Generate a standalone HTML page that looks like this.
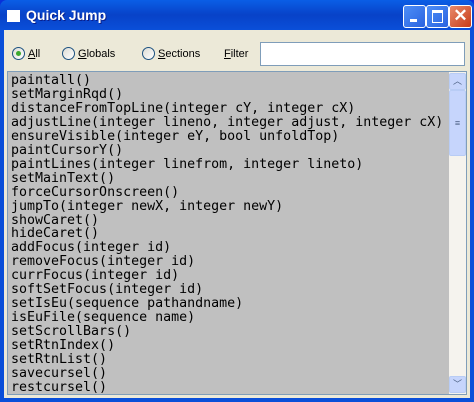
<!DOCTYPE html><html><head><style>
body{margin:0;width:474px;height:402px;overflow:hidden;background:#0831d9;font-family:"Liberation Sans",sans-serif}
.win{position:absolute;left:0;top:0;width:474px;height:402px;background:linear-gradient(#0a5ee6,#0842c8 15px,#0a4fd9 30px);border-radius:7px 7px 0 0}
.title{position:absolute;left:26px;top:7px;color:#fff;font-weight:bold;font-size:14px;text-shadow:1px 1px #0a1e8a}
.ico{position:absolute;left:7px;top:10px;width:13px;height:10px;background:#fff;border-top:2px solid #fff}
.btn{position:absolute;top:5px;width:21px;height:21px;border:1px solid #fff;border-radius:3px;background:linear-gradient(135deg,#4d8ef7,#2a63e0)}
.client{position:absolute;left:4px;top:30px;width:466px;height:368px;background:#ece9d8}
.lab{position:absolute;top:48px;font-size:11px;color:#000}
.rad{position:absolute;top:47px;width:11px;height:11px;border:1px solid #1c5180;border-radius:50%;background:linear-gradient(135deg,#dcdcd4,#fff)}
.list{position:absolute;left:7px;top:71px;width:458px;height:322px;background:#c0c0c0;border:1px solid #7f9db9;overflow:hidden}
pre{margin:0;padding:2px 0 0 3px;font-family:"DejaVu Sans Mono","Liberation Mono",monospace;font-size:13.3px;line-height:13.95px;color:#000}
.sb{position:absolute;left:441px;top:0;width:17px;height:322px;background:#f5f3ee}
.sbb{position:absolute;left:0;width:15px;height:15px;border:1px solid #b8ccf5;border-radius:2px;background:#c6d5fc;color:#4d6185;font-size:9px;text-align:center;line-height:15px}
</style></head><body><div class="win">
<div class="ico"></div><div class="title">Quick Jump</div>
<div class="btn" style="left:403px"><div style="position:absolute;left:6px;top:13px;width:7px;height:3px;background:#fff"></div></div>
<div class="btn" style="left:426px"><div style="position:absolute;left:5px;top:4px;width:9px;height:9px;border:1px solid #fff;border-top-width:3px"></div></div>
<div class="btn" style="left:449px;background:linear-gradient(135deg,#e88a6c,#c73b18);color:#fff;font-size:17px;text-align:center;line-height:20px;font-weight:bold">✕</div>
<div class="client"></div>
<div class="rad" style="left:12px"><div style="position:absolute;left:3px;top:3px;width:5px;height:5px;border-radius:50%;background:#3ba82e"></div></div>
<div class="lab" style="left:28px"><u>A</u>ll</div>
<div class="rad" style="left:62px"></div><div class="lab" style="left:78px"><u>G</u>lobals</div>
<div class="rad" style="left:142px"></div><div class="lab" style="left:158px"><u>S</u>ections</div>
<div class="lab" style="left:224px"><u>F</u>ilter</div>
<div style="position:absolute;left:260px;top:42px;width:203px;height:22px;background:#fff;border:1px solid #7f9db9"></div>
<div class="list"><pre>paintall()
setMarginRqd()
distanceFromTopLine(integer cY, integer cX)
adjustLine(integer lineno, integer adjust, integer cX)
ensureVisible(integer eY, bool unfoldTop)
paintCursorY()
paintLines(integer linefrom, integer lineto)
setMainText()
forceCursorOnscreen()
jumpTo(integer newX, integer newY)
showCaret()
hideCaret()
addFocus(integer id)
removeFocus(integer id)
currFocus(integer id)
softSetFocus(integer id)
setIsEu(sequence pathandname)
isEuFile(sequence name)
setScrollBars()
setRtnIndex()
setRtnList()
savecursel()
restcursel()</pre>
<div class="sb"><div class="sbb" style="top:1px">︿</div>
<div class="sbb" style="top:18px;height:64px;line-height:64px">≡</div>
<div class="sbb" style="top:304px">﹀</div></div></div>
</div></body></html>
